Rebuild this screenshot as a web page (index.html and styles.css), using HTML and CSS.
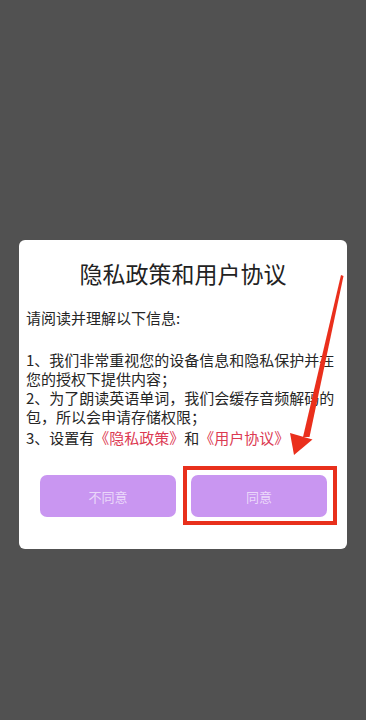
FILE: index.html
```html
<!DOCTYPE html>
<html lang="zh-CN">
<head>
<meta charset="utf-8">
<title>隐私政策和用户协议</title>
<link rel="stylesheet" href="styles.css">
</head>
<body>
<div class="screen">
  <div class="dialog">
    <h1 class="title">隐私政策和用户协议</h1>
    <p class="intro">请阅读并理解以下信息:</p>
    <p class="terms">1、我们非常重视您的设备信息和隐私保护并在您的授权下提供内容；<br>2、为了朗读英语单词，我们会缓存音频解码的包，所以会申请存储权限；</p>
    <p class="terms last">3、设置有<span class="link">《隐私政策》</span>和<span class="link">《用户协议》</span></p>
    <div class="actions">
      <button class="btn">不同意</button>
      <div class="agree-wrap">
        <button class="btn">同意</button>
        <div class="highlight"></div>
      </div>
    </div>
  </div>
  <svg class="arrow" width="366" height="720" viewBox="0 0 366 720">
    <polygon points="341,275 343.5,276 309.5,437 303,437" fill="#ea2f1c"/>
    <polygon points="290,433 312.5,439.5 294,455" fill="#ea2f1c"/>
  </svg>
</div>
</body>
</html>
```

FILE: styles.css
```css
html, body {
  margin: 0;
  padding: 0;
}
body {
  background: #515151;
  font-family: "Noto Sans CJK SC", "Noto Sans", sans-serif;
  color: #262626;
}
.screen {
  position: relative;
  width: 366px;
  height: 720px;
  padding: 240px 0 0 19px;
  box-sizing: border-box;
}
.dialog {
  width: 328px;
  box-sizing: border-box;
  background: #fff;
  border-radius: 6px;
  padding: 18px 7px 32px 7px;
}
.title {
  margin: 0;
  font-size: 23px;
  font-weight: 400;
  line-height: 30px;
  text-align: center;
  color: #222;
}
.intro {
  margin: 20px 0 0;
  font-size: 15px;
  line-height: 20px;
}
.terms {
  margin: 21.5px 0 0;
  font-size: 15px;
  line-height: 19px;
}
.terms.last {
  margin-top: 2px;
}
.link {
  color: #dc3a52;
}
.actions {
  display: flex;
  gap: 15px;
  margin: 28.5px 13px 0 14px;
}
.agree-wrap {
  position: relative;
  flex: 1;
  display: flex;
}
.btn {
  flex: 1;
  height: 42px;
  border: none;
  border-radius: 7px;
  background: #c996f1;
  color: rgba(255, 255, 255, 0.65);
  font-family: "Noto Sans CJK SC", sans-serif;
  font-size: 13px;
  padding: 0;
}
.highlight {
  position: absolute;
  left: -8px;
  right: -10px;
  top: -9px;
  bottom: -8px;
  border: 4px solid #e8301c;
}
.arrow {
  position: absolute;
  left: 0;
  top: 0;
  pointer-events: none;
}
```
